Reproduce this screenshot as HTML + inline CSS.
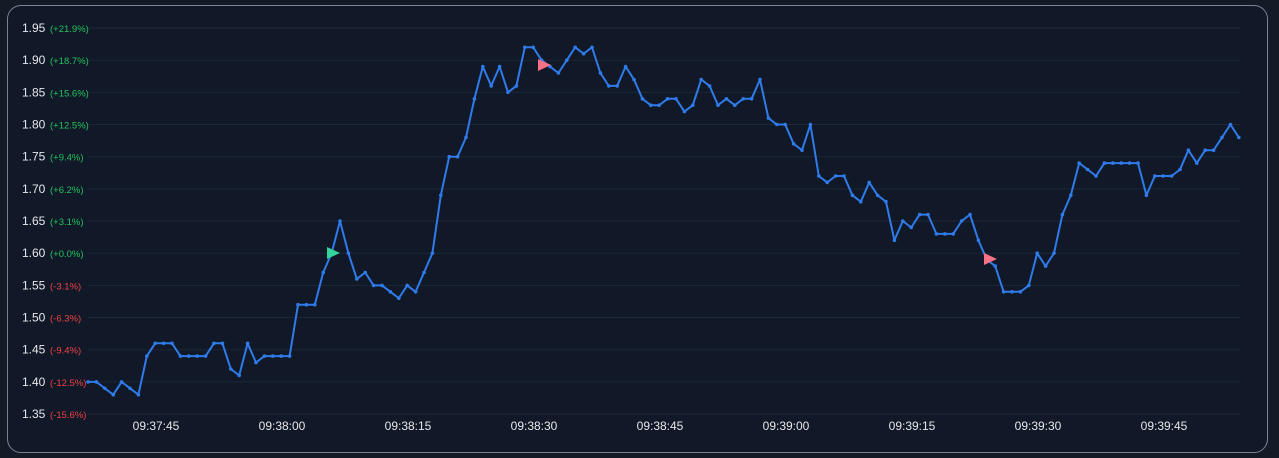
<!DOCTYPE html>
<html><head><meta charset="utf-8"><style>
html,body{margin:0;padding:0;background:#141a26;width:1279px;height:458px;overflow:hidden}
.card{position:absolute;left:7px;top:5px;width:1259px;height:446px;border:1px solid #7c8290;border-radius:14px;background:#111827}
svg{position:absolute;left:0;top:0}
text{font-family:"Liberation Sans",sans-serif}
</style></head><body>
<div class="card"></div>
<svg id="s" width="1279" height="458" xmlns="http://www.w3.org/2000/svg"></svg>
<script>
var v=[1.40,1.40,1.39,1.38,1.40,1.39,1.38,1.44,1.46,1.46,1.46,1.44,1.44,1.44,1.44,1.46,1.46,1.42,1.41,1.46,1.43,1.44,1.44,1.44,1.44,1.52,1.52,1.52,1.57,1.60,1.65,1.60,1.56,1.57,1.55,1.55,1.54,1.53,1.55,1.54,1.57,1.60,1.69,
1.75,1.75,1.78,1.84,1.89,1.86,1.89,1.85,1.86,1.92,1.92,1.90,1.89,1.88,1.90,1.92,1.91,1.92,1.88,1.86,1.86,1.89,1.87,1.84,1.83,1.83,1.84,1.84,1.82,1.83,1.87,1.86,1.83,1.84,1.83,1.84,1.84,1.87,1.81,1.80,1.80,1.77,1.76,1.80,
1.72,1.71,1.72,1.72,1.69,1.68,1.71,1.69,1.68,1.62,1.65,1.64,1.66,1.66,1.63,1.63,1.63,1.65,1.66,1.62,1.59,1.58,1.54,1.54,1.54,1.55,1.60,1.58,1.60,1.66,1.69,1.74,1.73,1.72,1.74,1.74,1.74,1.74,1.74,1.69,1.72,1.72,1.72,1.73,1.76,1.74,1.76,1.76,1.78,1.80,1.78];
function Y(p){return 28+(1.95-p)/0.05*32.17}
var pl=['+21.9%','+18.7%','+15.6%','+12.5%','+9.4%','+6.2%','+3.1%','+0.0%','-3.1%','-6.3%','-9.4%','-12.5%','-15.6%'];
var h='';
for(var i=0;i<13;i++){var p=1.95-i*0.05,y=Y(p);
h+='<line x1="88" x2="1240" y1="'+y.toFixed(1)+'" y2="'+y.toFixed(1)+'" stroke="#1e2738" stroke-width="1"/>';
h+='<text x="22" y="'+(y+4).toFixed(1)+'" font-size="12" fill="#e5e7eb">'+p.toFixed(2)+'</text>';
h+='<text x="50" y="'+(y+4).toFixed(1)+'" font-size="9.5" fill="'+(i<8?'#22c55e':'#ef4444')+'">('+pl[i]+')</text>';}
var t=['09:37:45','09:38:00','09:38:15','09:38:30','09:38:45','09:39:00','09:39:15','09:39:30','09:39:45'];
for(var i=0;i<t.length;i++)h+='<text x="'+(156+126*i)+'" y="430" font-size="12" fill="#e5e7eb" text-anchor="middle">'+t[i]+'</text>';
var pts=[];for(var i=0;i<v.length;i++)pts.push((88+8.4*i).toFixed(1)+','+Y(v[i]).toFixed(1));
h+='<polyline points="'+pts.join(' ')+'" fill="none" stroke="#2f7bea" stroke-width="2" stroke-linejoin="round"/>';
for(var i=0;i<pts.length;i++){var q=pts[i].split(',');h+='<circle cx="'+q[0]+'" cy="'+q[1]+'" r="1.8" fill="#2f7bea"/>';}
function tri(x,y,c){return '<polygon points="'+(x-6)+','+(y-6)+' '+(x+7)+','+y+' '+(x-6)+','+(y+6)+'" fill="'+c+'"/>';}
h+=tri(333,253,'#34d399');h+=tri(544,65,'#f87185');h+=tri(990,259,'#f87185');
document.getElementById('s').innerHTML=h;
</script>
</body></html>
